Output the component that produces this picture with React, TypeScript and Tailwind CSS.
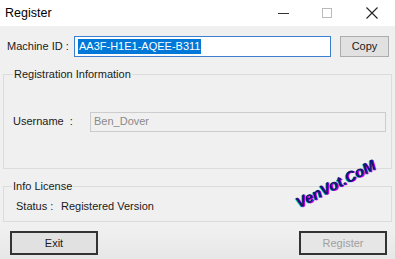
export default function App() {
  return (
    <div className="relative w-[395px] h-[259px] overflow-hidden bg-[#f0f0f0] font-['Liberation_Sans',Arial,sans-serif] text-[11px] text-[#1a1a1a]">
      {/* Title bar */}
      <div className="flex h-[26px] items-center bg-white pl-[5px]">
        <span className="text-[12.5px] text-black">Register</span>
        <div className="ml-auto flex items-center">
          <div className="flex w-[44px] justify-center">
            <div className="h-px w-[11px] bg-[#333]" />
          </div>
          <div className="flex w-[44px] justify-center">
            <div className="h-[10px] w-[10px] border border-[#bbb]" />
          </div>
          <div className="flex w-[46px] justify-center">
            <svg width="12" height="12" viewBox="0 0 12 12" stroke="#222" strokeWidth="1.1">
              <path d="M0.5 0.5 L11.5 11.5 M11.5 0.5 L0.5 11.5" />
            </svg>
          </div>
        </div>
      </div>

      {/* Machine ID row */}
      <div className="mt-[10px] flex items-center pl-[7px]">
        <span className="w-[67px]">Machine ID :</span>
        <div className="flex h-[21px] w-[257px] items-center border border-[#3c7fd1] bg-white px-[3px]">
          <span className="bg-[#0078d7] px-px leading-[15px] text-white">AA3F-H1E1-AQEE-B311</span>
        </div>
        <button className="ml-[9px] h-[21px] w-[49px] border border-[#adadad] bg-[#e1e1e1] text-[11px]">Copy</button>
      </div>

      {/* Registration Information */}
      <fieldset className="mx-[3px] mt-[9px] h-[103px] border border-[#dcdcdc]">
        <legend className="ml-[9px] px-px">Registration Information</legend>
        <div className="mt-[29px] flex items-center pl-[9px] pr-[5px]">
          <span className="w-[77px]">Username&nbsp;&nbsp;:</span>
          <div className="flex h-[20px] flex-1 items-center border border-[#cccccc] bg-[#f0f0f0] px-[3px] text-[#8a8a8a]">
            Ben_Dover
          </div>
        </div>
      </fieldset>

      {/* Info License */}
      <fieldset className="mx-[3px] mt-[9px] h-[44px] border border-[#dcdcdc]">
        <legend className="ml-[8px] px-px">Info License</legend>
        <div className="mt-[3px] flex pl-[12px]">
          <span className="w-[45px]">Status :</span>
          <span>Registered Version</span>
        </div>
      </fieldset>

      {/* Buttons */}
      <div className="mt-[7px] flex justify-between bg-gradient-to-b from-[#f0f0f0] to-[#e6e6e6] px-[10px] pb-[6px] pt-[2px]">
        <button className="h-[24px] w-[88px] border-2 border-[#333] bg-[#e1e1e1]">Exit</button>
        <button className="mr-[-2px] h-[24px] w-[88px] border-2 border-[#333] bg-[#e6e6e6] text-[#a0a0a0]">Register</button>
      </div>

      {/* Watermark */}
      <div className="absolute left-[292px] top-[173px] rotate-[-27deg] text-[15px] font-bold italic text-[#14146a] [text-shadow:1px_1px_0_#e000e0,-1px_0_0_#00e0e0]">
        VenVot.CoM
      </div>
    </div>
  );
}
